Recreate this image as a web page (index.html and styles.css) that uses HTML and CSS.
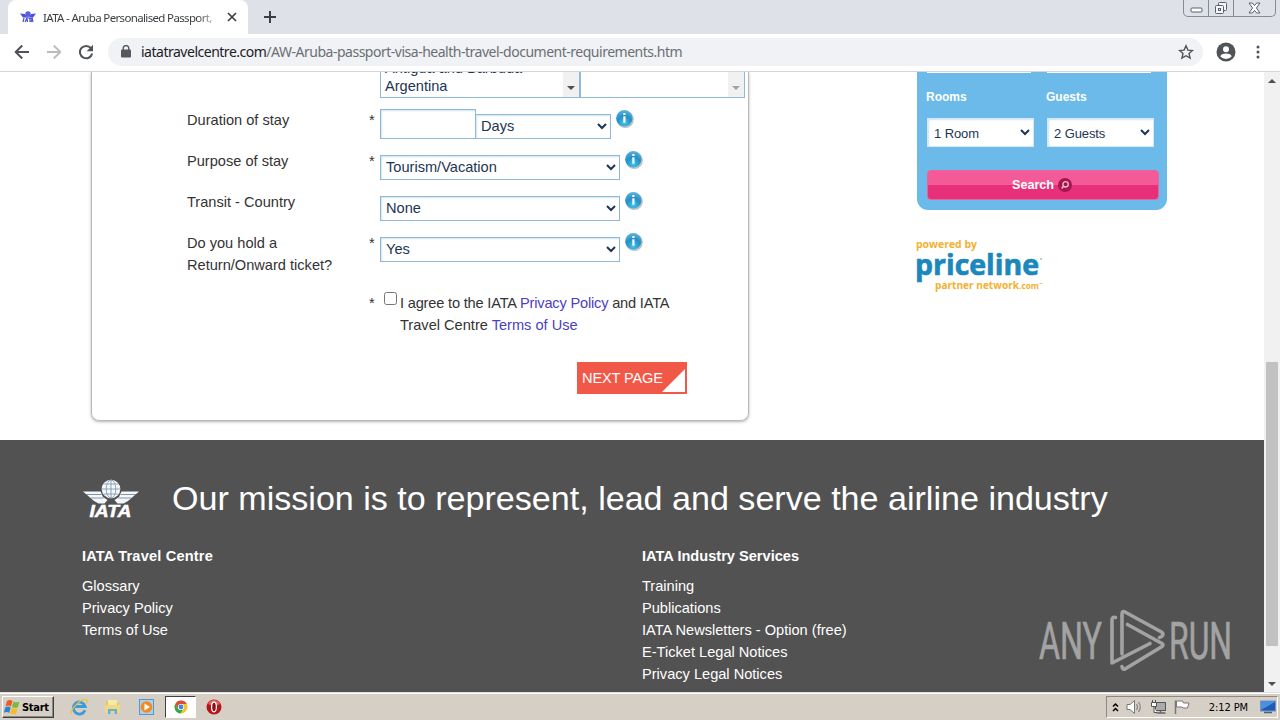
FILE: index.html
```html
<!DOCTYPE html>
<html lang="en">
<head>
  <meta charset="UTF-8">
  <title>IATA - Aruba Personalised Passport, Visa and Health</title>
  <link rel="stylesheet" href="styles.css">
</head>
<body>
  <svg class="defs" width="0" height="0">
    <defs>
      <radialGradient id="infoFill" cx="50%" cy="80%" r="80%">
        <stop offset="0" stop-color="#3fc3ea"/>
        <stop offset="0.55" stop-color="#2590c6"/>
        <stop offset="1" stop-color="#62b4db"/>
      </radialGradient>
      <symbol id="info" viewBox="0 0 20 20">
        <circle cx="10.3" cy="10.3" r="8.6" fill="#b9c3ca"/>
        <circle cx="9.3" cy="9.3" r="8.2" fill="url(#infoFill)"/>
        <rect x="8.3" y="4" width="2.2" height="2" fill="#fff"/>
        <path d="M8.300 7.300h2.200v6.400H8.300z" fill="#fff"/>
      </symbol>
    </defs>
  </svg>

  <header class="tabstrip">
    <div class="tab">
      <svg class="favicon" width="16" height="12" viewBox="0 0 16 12">
        <circle cx="8" cy="3" r="2.7" fill="#5a5fe0"/>
        <path d="M0 2.5l5 .5 1.5 2.5h3L11 3l5-.5-3 4H3z" fill="#4a50dc"/>
        <path d="M3 11l1-4M5 11l2-4 .5 4M8.500 7.300h3M10 7.500V11M11 11l1.200-3.500L13 11" stroke="#4a50dc" stroke-width="1.200" fill="none"/>
      </svg>
      <span class="tab-title">IATA - Aruba Personalised Passport,</span>
      <svg class="tab-close" width="10" height="10" viewBox="0 0 10 10"><path d="M1 1l8 8M9 1L1 9" stroke="#3c4043" stroke-width="1.700"/></svg>
    </div>
    <svg class="new-tab" width="12" height="12" viewBox="0 0 12 12"><path d="M6 0v12M0 6h12" stroke="#3c4043" stroke-width="2"/></svg>
    <div class="window-buttons">
      <span class="win min"><svg width="13" height="6" viewBox="0 0 13 6"><rect x="1" y="1" width="11" height="4" rx="1" fill="#fff" stroke="#5b6070"/></svg></span>
      <span class="win max"><svg width="14" height="14" viewBox="0 0 14 14" fill="#f5f6f8" stroke="#5b6070"><rect x="4.500" y="1.500" width="8" height="8" rx="1"/><rect x="1.500" y="4.500" width="8" height="8" rx="1"/><rect x="4.500" y="7.500" width="2" height="2"/></svg></span>
      <span class="win close"><svg width="13" height="12" viewBox="0 0 13 12"><path d="M1 1h3.300l2.200 2.600L8.700 1H12L8.400 6l3.600 5H8.700L6.500 8.400 4.300 11H1l3.600-5z" fill="#fff" stroke="#5b6070"/></svg></span>
    </div>
  </header>

  <nav class="toolbar">
    <svg class="nav-icon" width="16" height="16" viewBox="0 0 16 16"><path d="M15 8H2M8.200 1.500L1.700 8l6.500 6.500" fill="none" stroke="#505357" stroke-width="2"/></svg>
    <svg class="nav-icon" width="16" height="16" viewBox="0 0 16 16"><path d="M1 8h13M7.800 1.500L14.300 8l-6.500 6.500" fill="none" stroke="#b9bbbe" stroke-width="1.800"/></svg>
    <svg class="nav-icon" width="16" height="16" viewBox="0 0 16 16"><path d="M13 4.200A6.200 6.200 0 1 0 14.200 9.600" fill="none" stroke="#505357" stroke-width="2"/><path d="M15 .8v6.400H8.600z" fill="#505357"/></svg>
    <div class="address">
      <svg width="10" height="13" viewBox="0 0 10 13"><rect x="0" y="4.500" width="10" height="8" rx="1" fill="#55585c"/><path d="M2.200 5V3.300a2.800 2.800 0 0 1 5.600 0V5" fill="none" stroke="#55585c" stroke-width="1.400"/></svg>
      <span class="url"><b>iatatravelcentre.com</b>/AW-Aruba-passport-visa-health-travel-document-requirements.htm</span>
      <svg width="16" height="16" viewBox="0 0 16 16"><path d="M8 1.800l1.900 4.300 4.600.4-3.500 3.100 1.100 4.500L8 11.700l-4.100 2.400L5 9.600 1.500 6.500l4.600-.4z" fill="none" stroke="#505357" stroke-width="1.400"/></svg>
    </div>
    <svg class="avatar" width="20" height="20" viewBox="0 0 20 20"><circle cx="10" cy="10" r="9.500" fill="#505357"/><circle cx="10" cy="7.200" r="3" fill="#fff"/><path d="M4.200 14.200c1-2 3.200-2.700 5.800-2.700s4.800.7 5.800 2.700A7.200 7.200 0 0 1 10 17a7.200 7.200 0 0 1-5.800-2.800z" fill="#fff"/></svg>
    <svg width="4" height="14" viewBox="0 0 4 14" fill="#505357"><circle cx="2" cy="2" r="1.500"/><circle cx="2" cy="7" r="1.500"/><circle cx="2" cy="12" r="1.500"/></svg>
  </nav>

  <div class="viewport">
    <div class="page">
      <main class="main">
        <form class="panel">
          <div class="lists">
            <div class="listbox nationality">
              <div class="options"><span>Antigua and Barbuda</span><span>Argentina</span></div>
              <div class="list-scroll"><i class="arrow"></i></div>
            </div>
            <div class="listbox chosen">
              <div class="options"></div>
              <div class="list-scroll"><i class="arrow off"></i></div>
            </div>
          </div>
          <div class="row">
            <label>Duration of stay</label><span class="star">*</span>
            <div class="field"><input class="days" type="text"><select class="unit"><option>Days</option></select><svg class="info"><use href="#info"/></svg></div>
          </div>
          <div class="row">
            <label>Purpose of stay</label><span class="star">*</span>
            <div class="field"><select><option>Tourism/Vacation</option></select><svg class="info"><use href="#info"/></svg></div>
          </div>
          <div class="row">
            <label>Transit - Country</label><span class="star"></span>
            <div class="field"><select><option>None</option></select><svg class="info"><use href="#info"/></svg></div>
          </div>
          <div class="row">
            <label>Do you hold a Return/Onward ticket?</label><span class="star">*</span>
            <div class="field"><select><option>Yes</option></select><svg class="info"><use href="#info"/></svg></div>
          </div>
          <div class="agree">
            <span class="star">*</span>
            <input type="checkbox">
            <p><span class="tight">I agree to the IATA <a href="#">Privacy Policy</a> and IATA</span><br>Travel Centre <a href="#">Terms of Use</a></p>
          </div>
          <button class="next" type="button">NEXT PAGE<svg width="23" height="23" viewBox="0 0 23 23"><path d="M23 0v23H0z" fill="#fff"/></svg></button>
        </form>

        <aside class="sidebar">
          <div class="hotels">
            <div class="stubs"><i></i><i></i></div>
            <div class="pair">
              <div><b>Rooms</b><select><option>1 Room</option></select></div>
              <div><b>Guests</b><select><option>2 Guests</option></select></div>
            </div>
            <button class="search" type="button">Search
              <svg width="14" height="14" viewBox="0 0 14 14"><circle cx="7" cy="7" r="7" fill="#a31750"/><circle cx="7.600" cy="6.300" r="2.700" fill="none" stroke="#fbc" stroke-width="1.300"/><path d="M5.600 8.300l-2 2.200" stroke="#fbc" stroke-width="1.500"/></svg>
            </button>
          </div>
          <svg class="priceline" width="128" height="56" viewBox="0 0 128 56">
            <g font-family="Open Sans, sans-serif" font-weight="bold">
              <text x="-1" y="10" font-size="10.500" fill="#f5b02e" textLength="61" lengthAdjust="spacingAndGlyphs">powered by</text>
              <text x="-2" y="37" font-size="29" fill="#1b87bd" stroke="#1b87bd" stroke-width=".7" textLength="124" lengthAdjust="spacingAndGlyphs">priceline</text>
              <text x="18" y="50.500" font-size="10.500" fill="#f5b02e" textLength="84" lengthAdjust="spacingAndGlyphs">partner network</text>
              <text x="102" y="50.500" font-size="8" fill="#f5b02e" textLength="20" lengthAdjust="spacingAndGlyphs">.com</text>
            </g>
            <circle cx="124" cy="21" r="1" fill="#8ec5df"/>
            <path d="M122.500 45.500h3" stroke="#f5c56b"/>
          </svg>
        </aside>
      </main>

      <footer class="footer">
        <div class="mission">
          <svg width="58" height="40" viewBox="0 0 58 40">
            <circle cx="29" cy="10" r="9.300" fill="#f3f8fc"/>
            <g fill="none" stroke="#7890a5" stroke-width=".8"><ellipse cx="29" cy="10" rx="4.800" ry="9"/><path d="M29 1v18M20 10h18M21.800 5h14.400M21.800 15h14.400"/></g>
            <path d="M1 12.500h17.500l2.500 5.500 4.500 3-3 3.500h-6L12 22z" fill="#f3f8fc"/>
            <path d="M57 12.500H39.500L37 18l-4.500 3 3 3.500h6L46 22z" fill="#f3f8fc"/>
            <path d="M4 15.500h15.500M8.500 19h13M49.500 19h-13M54 15.500H38.500" stroke="#687989" stroke-width=".8"/>
            <text x="7.500" y="37.500" font-family="Liberation Sans, sans-serif" font-size="16.500" font-weight="bold" font-style="italic" fill="#fff" stroke="#fff" stroke-width=".5" textLength="42" lengthAdjust="spacingAndGlyphs">IATA</text>
          </svg>
          <h2>Our mission is to represent, lead and serve the airline industry</h2>
        </div>
        <div class="columns">
          <div class="column">
            <h3 class="wide">IATA Travel Centre</h3>
            <a href="#">Glossary</a>
            <a href="#">Privacy Policy</a>
            <a href="#">Terms of Use</a>
          </div>
          <div class="column services">
            <h3>IATA Industry Services</h3>
            <a href="#">Training</a>
            <a href="#">Publications</a>
            <a href="#">IATA Newsletters - Option (free)</a>
            <a href="#">E-Ticket Legal Notices</a>
            <a href="#">Privacy Legal Notices</a>
          </div>
        </div>
      </footer>
    </div>
    <div class="scrollbar">
      <i class="arrow up"></i>
      <div class="thumb"></div>
      <i class="arrow"></i>
    </div>
    <svg class="watermark" width="194" height="64" viewBox="0 0 194 64">
      <g font-family="Roboto, sans-serif" font-size="52" fill="#a3a3a3" stroke="#a3a3a3" stroke-width=".7">
        <text x="0" y="50" textLength="63" lengthAdjust="spacingAndGlyphs">ANY</text>
        <text x="130" y="50" textLength="63" lengthAdjust="spacingAndGlyphs">RUN</text>
      </g>
      <g fill="none" stroke="#a3a3a3" stroke-width="3.600" stroke-linejoin="round" stroke-linecap="round">
        <path d="M76.500 8.500Q73 7.500 73 11v43L111 34.500"/>
        <path d="M83 45V5q0-3.500 3-2l36.500 20q3 2.200 0 4.500l-2 1"/>
        <path d="M88.500 15.500l34.500 19q2 1.500 0 3L86 60q-2.500 1-3-2.500"/>
      </g>
    </svg>
  </div>

  <div class="taskbar">
    <div class="start">
      <svg width="17" height="16" viewBox="0 0 17 16"><path d="M3 2q3-2 5.500 0L7 7.500q-2.500-2-5.500 0z" fill="#ed5a24"/><path d="M9.500 2.500q3 1.700 6 0L14 8q-3 1.700-6 0z" fill="#7bb93a"/><path d="M1.200 8.500q3-2 5.500 0L5.200 14q-2.500-2-5.500 0z" fill="#3282d0"/><path d="M7.700 9q3 1.700 6 0l-1.500 5.500q-3 1.700-6 0z" fill="#f6bd27"/></svg>
      <span>Start</span>
    </div>
    <div class="quick">
      <span><svg width="18" height="18" viewBox="0 0 18 18"><path d="M15 12.200A6 6 0 1 1 15.200 8.500H5" fill="none" stroke="#3c9bdc" stroke-width="2.800"/><path d="M1.500 16C-.5 12 12-1 16.500 2c1 .8.500 2.200-.2 3.300" fill="none" stroke="#edc23c" stroke-width="1.300"/></svg></span>
      <span><svg width="18" height="18" viewBox="0 0 18 18"><path d="M2 3h6l1 2h6v9H2z" fill="#e7c65c"/><path d="M4 2h9v7H4z" fill="#f8e9a5"/><path d="M1 7h15v8H1z" fill="#f2d981"/><path d="M4 16v-5h9v5h-2.500v-3h-4v3z" fill="#62b3dc"/></svg></span>
      <span><svg width="18" height="18" viewBox="0 0 18 18"><rect x="1.500" y="1.500" width="14" height="15" fill="#a8d0ef" stroke="#5598cf"/><circle cx="8.500" cy="9" r="5.800" fill="#f48a1d"/><path d="M6.500 5.500l5.500 3.500-5.500 3.500z" fill="#fff"/></svg></span>
      <span class="active"><svg width="14" height="14" viewBox="0 0 14 14"><circle cx="7" cy="7" r="6.500" fill="#f3c622"/><path d="M1.300 4A6.500 6.500 0 0 1 12.800 4H7L4 8z" fill="#dd4b3a"/><path d="M1.300 4A6.500 6.500 0 0 0 6.500 13.500L9.500 8.500H4z" fill="#35a552"/><circle cx="7" cy="7" r="3.100" fill="#fff"/><circle cx="7" cy="7" r="2.400" fill="#4285e8"/></svg></span>
      <span><svg width="16" height="16" viewBox="0 0 16 16"><circle cx="8" cy="8" r="7.500" fill="#b91419"/><path d="M2 5a6.500 6.500 0 0 1 12 0q-6 3-12 0z" fill="#dd6260"/><ellipse cx="8" cy="8" rx="2.400" ry="4.800" fill="#8f0c10" stroke="#fff" stroke-width="1.300"/></svg></span>
    </div>
    <div class="tray">
      <svg width="7" height="11" viewBox="0 0 7 11"><path d="M1 4.500L3.500 2 6 4.500M1 9L3.500 6.500 6 9" fill="none" stroke="#000" stroke-width="1.500"/></svg>
      <svg width="17" height="16" viewBox="0 0 17 16"><path d="M1 5.500h3L8.500 1.500v13L4 10.500H1z" fill="#fff" stroke="#777"/><path d="M10.500 5q2 3 0 6M12.500 3q3.500 5 0 10" fill="none" stroke="#8b8b8b" stroke-width="1.300"/></svg>
      <svg width="17" height="16" viewBox="0 0 17 16"><rect x="5.500" y="3.500" width="10" height="8" fill="#aaa" stroke="#555"/><path d="M6.500 14h9M10.500 11.500v2" stroke="#666" stroke-width="1.500"/><path d="M1.500 3.500h5v4h-5zM2.500 1v2M5.500 1v2M4 8v5.500h3" fill="#fff" stroke="#555"/></svg>
      <svg width="17" height="16" viewBox="0 0 17 16"><path d="M1.500 15V1.500" stroke="#777" stroke-width="1.500"/><path d="M2.500 2h6l1 2h5.500l-1.500 5H9L8 8H2.500z" fill="#fff" stroke="#777"/></svg>
      <span class="clock">2:12 PM</span>
      <svg width="16" height="14" viewBox="0 0 16 14"><rect x=".5" y="1" width="15" height="10" fill="#1d5bb5" stroke="#7894bb"/><path d="M1 10L15 2v-1H1z" fill="#4b8fe0"/><path d="M4 12.500h8" stroke="#47617c" stroke-width="1.500"/></svg>
    </div>
  </div>
</body>
</html>
```
FILE: styles.css
```css
* {
  box-sizing: border-box;
  margin: 0;
  padding: 0;
}

body {
  width: 1280px;
  height: 720px;
  overflow: hidden;
  display: flex;
  flex-direction: column;
  font-family: "Liberation Sans", Arial, sans-serif;
  font-size: 14.6px;
  line-height: 22px;
  color: #333;
  background: #fff;
}

svg {
  display: block;
  flex: none;
}

a {
  color: #4a3fc0;
  text-decoration: none;
}

.defs {
  position: absolute;
}

/* browser chrome */
.tabstrip {
  flex: none;
  height: 34px;
  display: flex;
  align-items: flex-start;
  background: #dee1e8;
  padding-left: 8px;
}

.tab {
  width: 240px;
  height: 34px;
  display: flex;
  align-items: center;
  padding: 0 11px 0 12px;
  background: #fff;
  border-radius: 8px 8px 0 0;
}

.tab-title {
  width: 174px;
  margin-left: 7px;
  margin-right: 11px;
  overflow: hidden;
  white-space: nowrap;
  font: 11.5px "Noto Sans", sans-serif;
  letter-spacing: -0.65px;
  color: #3c4043;
  -webkit-mask-image: linear-gradient(to right, #000 155px, transparent 178px);
  mask-image: linear-gradient(to right, #000 155px, transparent 178px);
}

.new-tab {
  margin: 11px 0 0 16px;
}

.window-buttons {
  display: flex;
  margin-left: auto;
  margin-right: 4px;
  height: 17px;
  border: 1px solid #858a99;
  border-top: 0;
  border-radius: 0 0 5px 5px;
}

.win {
  display: flex;
  align-items: center;
  justify-content: center;
  width: 25px;
  border-right: 1px solid #858a99;
}

.win.min {
  padding-top: 4px;
}

.win.close {
  width: 41px;
  border-right: 0;
}

.toolbar {
  flex: none;
  height: 38px;
  display: flex;
  align-items: center;
  padding: 0 20px 2px 14px;
  border-bottom: 1px solid #d5d7da;
}

.nav-icon {
  margin-right: 16px;
}

.address {
  width: 1095px;
  height: 28px;
  margin-left: -2px;
  display: flex;
  align-items: center;
  padding: 0 9px 0 13px;
  border-radius: 14px;
  background: #f0f2f5;
}

.url {
  flex: 1;
  margin-left: 10px;
  font: 14px "Noto Sans", sans-serif;
  letter-spacing: -0.49px;
  color: #6b6f74;
}

.url b {
  font-weight: normal;
  color: #202124;
}

.avatar {
  margin: 0 20px 0 13px;
}

/* page */
.viewport {
  position: relative;
  height: 620px;
  display: flex;
  overflow: hidden;
}

.page {
  width: 1264px;
}

.main {
  height: 368px;
  display: flex;
  align-items: flex-start;
  padding-left: 91px;
}

.panel {
  width: 658px;
  height: 349px;
  border: 1px solid #b9b9b9;
  border-top: 0;
  border-radius: 0 0 8px 8px;
  box-shadow: 0 1px 3px rgba(0, 0, 0, 0.3);
  padding-left: 95px;
}

.lists {
  display: flex;
  height: 26px;
  margin: 0 0 11px 193px;
}

.listbox {
  display: flex;
  border: 1px solid #8fb9d6;
  border-top: 0;
  overflow: hidden;
}

.nationality {
  width: 200px;
}

.chosen {
  width: 165px;
}

.options {
  flex: 1;
  display: flex;
  flex-direction: column;
  justify-content: flex-end;
  padding: 0 4px 2px;
  line-height: 18px;
  color: #1c3554;
}

.list-scroll {
  width: 16px;
  display: flex;
  align-items: flex-end;
  justify-content: center;
  padding-bottom: 7px;
  background: #f1f1f1;
}

.arrow {
  border: 4px solid transparent;
  border-top-color: #4f4f4f;
  border-bottom: 0;
}

.arrow.up {
  border-top: 0;
  border-bottom: 4px solid #4f4f4f;
}

.arrow.off {
  border-top-color: #a3a3a3;
}

.row {
  display: flex;
  height: 41px;
}

.row label {
  width: 182px;
  padding-right: 30px;
}

.star {
  width: 11px;
}

.field {
  display: flex;
  align-items: flex-start;
}

select {
  width: 240px;
  height: 26px;
  margin-top: 5px;
  padding: 0 0 1px 1px;
  border: 1px solid #8fb9d6;
  border-radius: 0;
  background-color: #fff;
  box-shadow: inset 1px 1px 2px #cfe4f2;
  font: 14.6px "Liberation Sans", Arial, sans-serif;
  color: #1c3554;
}

.row select {
  height: 25px;
}

.days {
  width: 96px;
  height: 30px;
  border: 1px solid #8fb9d6;
  box-shadow: inset 1px 1px 2px #cfe4f2;
}

.field .unit {
  width: 136px;
  margin-left: -1px;
}

.info {
  width: 20px;
  height: 20px;
  margin-left: 4px;
}

.agree {
  display: flex;
  margin: 19px 0 26px 182px;
}

.agree input {
  width: 13px;
  height: 13px;
  margin: 0 4px 0 4px;
}

.agree p {
  margin-left: -1px;
}

.tight {
  letter-spacing: -0.18px;
}

.next {
  display: flex;
  align-items: flex-end;
  justify-content: space-between;
  width: 110px;
  height: 32px;
  margin-left: 390px;
  padding: 0 2px 2px 5px;
  border: 0;
  background: #f25848;
  color: #fff;
  font: 14.6px/28px "Liberation Sans", Arial, sans-serif;
  letter-spacing: -0.15px;
  white-space: nowrap;
}

.next svg {
  margin-left: -2px;
}

/* hotel search */
.sidebar {
  width: 250px;
  margin-left: 168px;
}

.hotels {
  height: 138px;
  padding: 0 8px 0 10px;
  background: #6bbaea;
  border-radius: 0 0 11px 11px;
}

.stubs {
  display: flex;
  gap: 16px;
  height: 15px;
}

.stubs i {
  width: 104px;
  height: 1px;
  background: #fff;
}

.pair {
  display: flex;
  gap: 13px;
}

.pair b {
  display: block;
  margin-left: -1px;
  font-size: 12px;
  line-height: 20px;
  color: #fff;
}

.pair select {
  display: block;
  width: 107px;
  height: 29px;
  margin-top: 11px;
  padding: 1px 0 0 2px;
  border-color: #d5e8f5;
  font-size: 13px;
  letter-spacing: -0.1px;
}

.search {
  display: flex;
  align-items: center;
  justify-content: center;
  gap: 4px;
  width: 232px;
  height: 30px;
  margin-top: 23px;
  padding-right: 2px;
  border: 1px solid #e8649a;
  border-radius: 4px;
  background: linear-gradient(#f45a98 50%, #e82f79 50%);
  color: #fff;
  font: bold 12.6px "Liberation Sans", Arial, sans-serif;
}

.priceline {
  margin-top: 28px;
  overflow: visible;
}

/* footer */
.footer {
  height: 252px;
  padding: 39px 0 0 82px;
  background: #525252;
  color: #fff;
  overflow: hidden;
}

.mission {
  display: flex;
}

.mission h2 {
  margin-left: 32px;
  font-size: 34.1px;
  line-height: 38px;
  font-weight: normal;
  white-space: nowrap;
}

.columns {
  display: flex;
  margin-top: 26px;
}

.column {
  width: 560px;
}

.column h3 {
  font-size: 14.6px;
  line-height: 22px;
  margin-bottom: 8px;
}

.column .wide {
  letter-spacing: 0.17px;
}

.column a {
  display: block;
  color: #fff;
}

.scrollbar {
  width: 16px;
  display: flex;
  flex-direction: column;
  align-items: center;
  padding: 7px 2px 6px 1px;
  background: #f1f1f1;
}

.scrollbar .thumb {
  width: 12px;
  height: 284px;
  margin: 279px 0 auto;
  background: #c1c1c1;
}

.watermark {
  position: absolute;
  left: 1039px;
  top: 537px;
}

/* taskbar */
.taskbar {
  height: 28px;
  display: flex;
  align-items: center;
  padding: 2px 2px 0;
  background: #d6cfc6;
  box-shadow: inset 0 1px #e4e0da, inset 0 2px #fff;
}

.start {
  display: flex;
  align-items: center;
  gap: 1px;
  width: 52px;
  height: 22px;
  padding-left: 1px;
  border: 1px solid;
  border-color: #fff #404040 #404040 #fff;
  box-shadow: inset -1px -1px #8d8880;
  font: bold 11px "DejaVu Sans Condensed", sans-serif;
  letter-spacing: -0.3px;
  color: #000;
}

.quick {
  display: flex;
  align-items: center;
  margin-left: 8px;
}

.quick span {
  width: 34px;
  height: 22px;
  display: flex;
  align-items: center;
  justify-content: center;
}

.quick .active {
  width: 31px;
  margin: 0 1px 0 1px;
  border: 1px solid;
  border-color: #404040 #fff #fff #404040;
  background: #fff;
}

.tray {
  display: flex;
  align-items: center;
  width: 172px;
  height: 22px;
  margin-left: auto;
  padding: 0 1px 0 5px;
  border: 1px solid;
  border-color: #8d8880 #fff #fff #8d8880;
}

.tray svg + svg {
  margin-left: 7px;
}

.clock {
  margin-left: auto;
  margin-right: 12px;
  font: 11px "DejaVu Sans Condensed", sans-serif;
  letter-spacing: -0.1px;
  color: #000;
}
```
